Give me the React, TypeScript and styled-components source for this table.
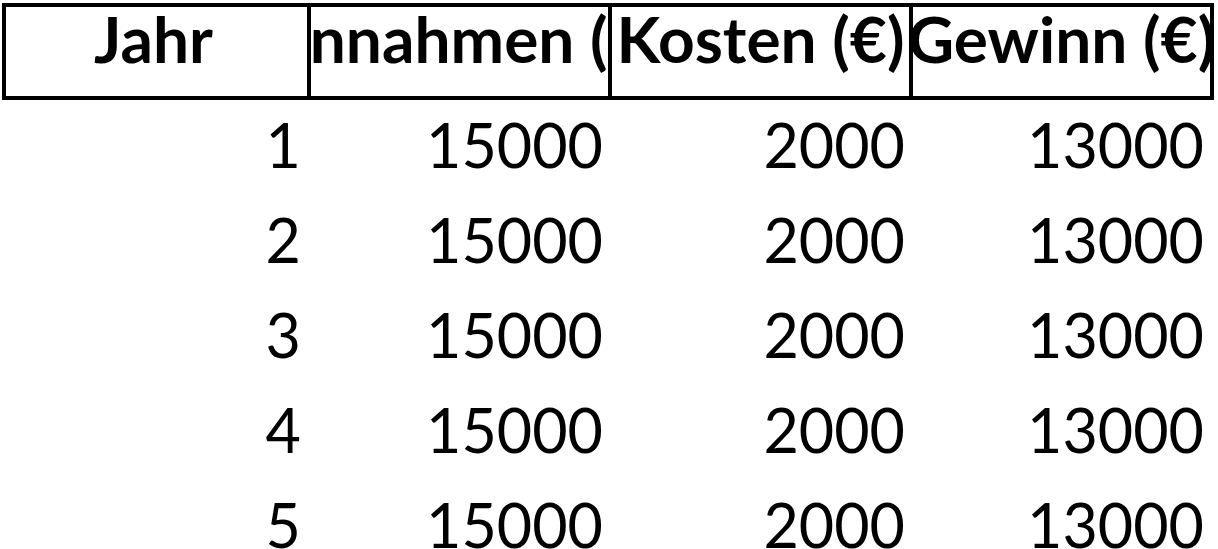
import styled, { createGlobalStyle } from 'styled-components';

const GlobalStyle = createGlobalStyle`
  html, body {
    margin: 0;
    padding: 0;
    background: #fff;
  }
  body {
    font-family: Lato, "Liberation Sans", sans-serif;
    color: #000;
  }
`;

const columns = ['Jahr', 'Einnahmen (€)', 'Kosten (€)', 'Gewinn (€)'];

const rows = [1, 2, 3, 4, 5].map(year => ({
  year,
  income: 15000,
  costs: 2000,
  profit: 13000,
}));

export default function App() {
  return (
    <>
      <GlobalStyle />
      <Sheet>
        <HeaderRow>
          {columns.map((label, i) => (
            <HeaderCell key={label} $first={i === 0}>
              <span>{label}</span>
            </HeaderCell>
          ))}
        </HeaderRow>
        {rows.map(row => (
          <Row key={row.year}>
            <Cell>{row.year}</Cell>
            <Cell>{row.income}</Cell>
            <Cell>{row.costs}</Cell>
            <Cell $last>{row.profit}</Cell>
          </Row>
        ))}
      </Sheet>
    </>
  );
}

const Sheet = styled.div`
  width: 1212px;
  padding: 3px 0 0 2px;
`;

const HeaderRow = styled.div`
  display: grid;
  grid-template-columns: repeat(4, 1fr);
  height: 97px;
  box-sizing: border-box;
  border: 4px solid #000;
`;

const HeaderCell = styled.div<{ $first?: boolean }>`
  display: flex;
  justify-content: center;
  overflow: hidden;
  white-space: nowrap;
  padding-right: ${p => (p.$first ? '6px' : '0')};
  border-left: ${p => (p.$first ? 'none' : '4px solid #000')};
  font-size: 64px;
  font-weight: 700;
  line-height: 63px;

  span {
    flex-shrink: 0;
  }
`;

const Row = styled.div`
  display: grid;
  grid-template-columns: 302px 302px 302px 302px;
  padding-left: 4px;
  height: 95px;
`;

const Cell = styled.div<{ $last?: boolean }>`
  text-align: right;
  font-size: 61px;
  line-height: 89px;
  padding-right: ${p => (p.$last ? '10px' : '7px')};
`;
